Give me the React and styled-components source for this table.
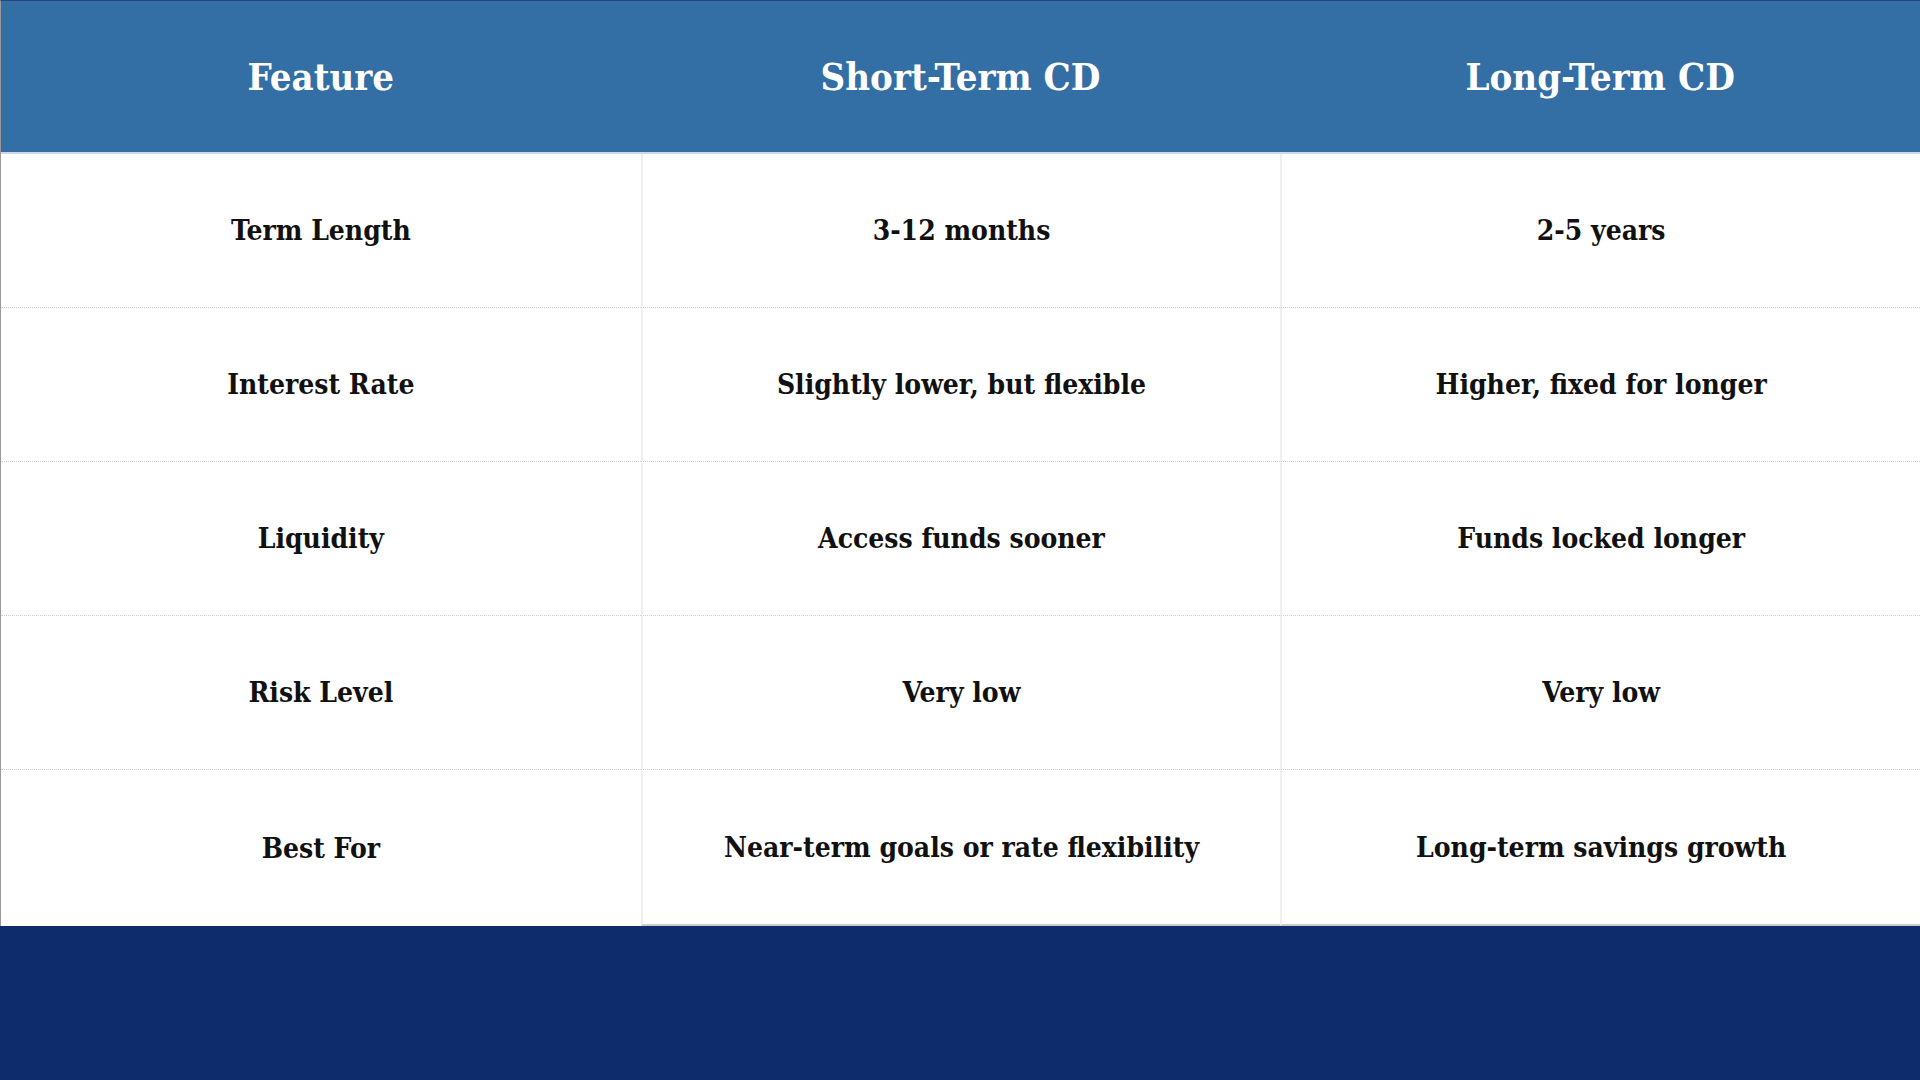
import React from "react";
import styled, { createGlobalStyle } from "styled-components";

const Global = createGlobalStyle`
  html, body { margin: 0; padding: 0; background: #ffffff; }
  body { font-family: "DejaVu Serif Condensed", "DejaVu Serif", serif; }
`;

const Page = styled.div`
  width: 1920px;
  height: 1080px;
  display: flex;
  flex-direction: column;
  background: #0e2c6b;
  overflow: hidden;
`;

const Table = styled.div`
  display: grid;
  grid-template-columns: repeat(3, 1fr);
  grid-template-rows: 153px repeat(4, 154px) 156px;
  background: #ffffff;
  border-left: 1px solid #9a9a9a;
  border-top: 1px solid #24467d;
  box-sizing: border-box;
`;

const HeadCell = styled.div`
  background: #336ea4;
  color: #ffffff;
  display: flex;
  align-items: center;
  justify-content: center;
  font-family: "DejaVu Serif Condensed", "DejaVu Serif", serif;
  font-stretch: condensed;
  font-weight: 700;
  font-size: 38px;
  border-bottom: 2px solid #cfd8e3;
  box-sizing: border-box;
`;

const Cell = styled.div`
  display: flex;
  align-items: center;
  justify-content: center;
  color: #111111;
  font-family: "DejaVu Serif Condensed", "DejaVu Serif", serif;
  font-stretch: condensed;
  font-weight: 700;
  font-size: 28px;
  border-left: ${(p) => (p.$first ? "none" : "2px solid #efefef")};
  border-bottom: ${(p) =>
    p.$last ? (p.$first ? "none" : "2px solid #cccccc") : "1px dotted #cfcfcf"};
  box-sizing: border-box;
`;

const Footer = styled.div`
  flex: 1;
  background: #0e2c6b;
`;

const headers = ["Feature", "Short-Term CD", "Long-Term CD"];
const rows = [
  ["Term Length", "3-12 months", "2-5 years"],
  ["Interest Rate", "Slightly lower, but flexible", "Higher, fixed for longer"],
  ["Liquidity", "Access funds sooner", "Funds locked longer"],
  ["Risk Level", "Very low", "Very low"],
  ["Best For", "Near-term goals or rate flexibility", "Long-term savings growth"],
];

export default function App() {
  return (
    <>
      <Global />
      <Page>
        <Table>
          {headers.map((h) => (
            <HeadCell key={h}>{h}</HeadCell>
          ))}
          {rows.map((r, ri) =>
            r.map((c, ci) => (
              <Cell
                key={ri + "-" + ci}
                $first={ci === 0}
                $last={ri === rows.length - 1}
              >
                {c}
              </Cell>
            ))
          )}
        </Table>
        <Footer />
      </Page>
    </>
  );
}
